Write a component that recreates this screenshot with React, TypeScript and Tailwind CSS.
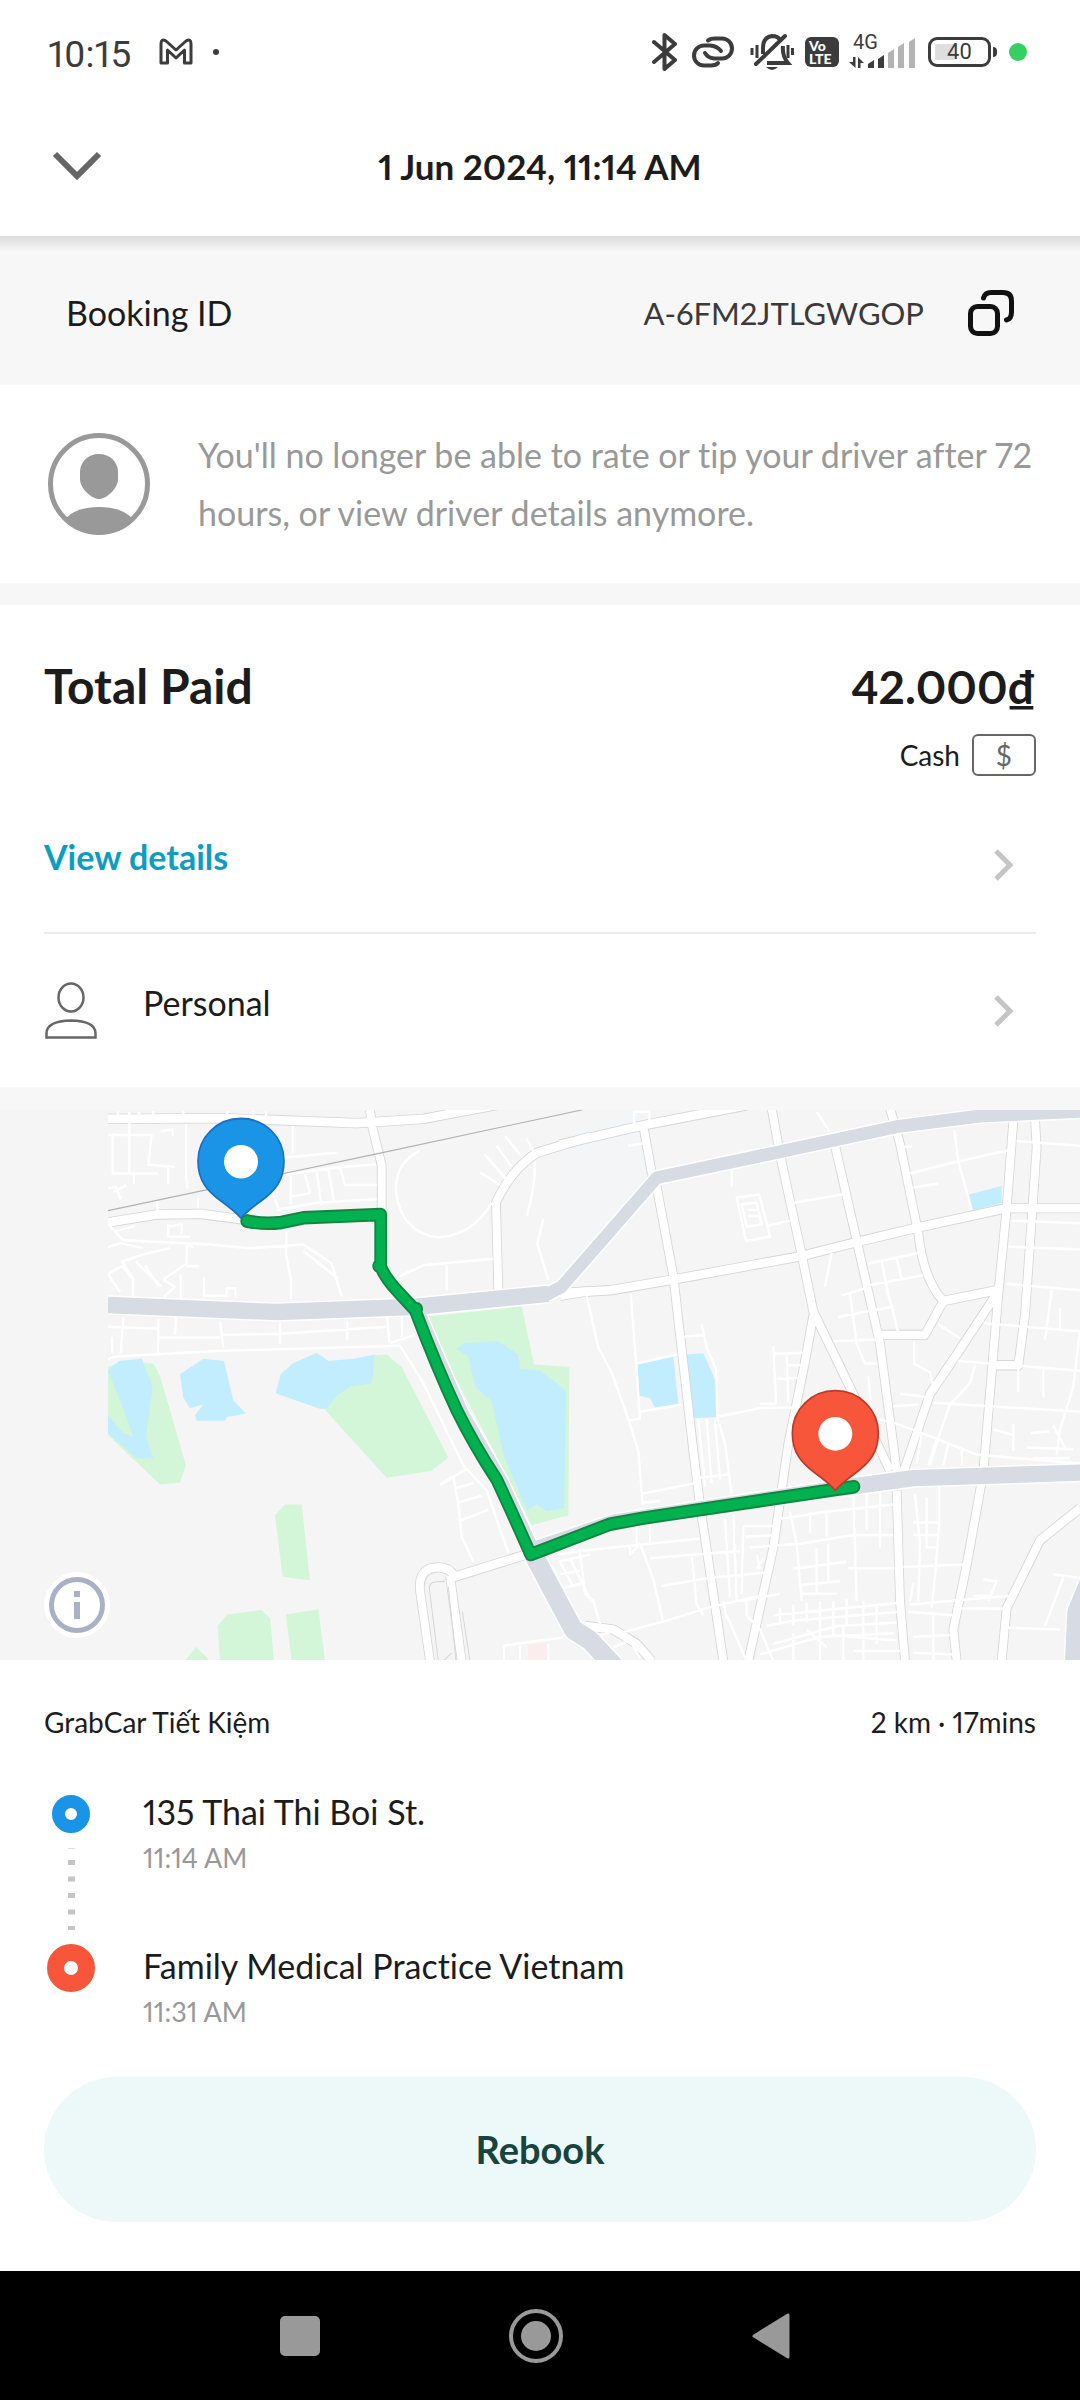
const WEST_MINOR = [
  "M54 95 H185 M68 90 V203 H205 M118 30 V205 M84 28 V50 M147 30 V45 M190 28 V45 M280 28 V45 M412 28 V50 M490 28 V50 M528 28 V50",
  "M185 92 L175 178 L255 185 M235 180 V232 M132 205 V232 M212 85 L248 80 V98 M288 65 V200 L292 245",
  "M54 245 L78 240 L92 275 M70 255 L110 235 M202 280 V308 M325 268 V300",
  "M608 70 V145 M585 158 L740 145 M545 250 L565 300 M602 210 V290 M602 268 L660 258 L645 205 M680 200 L694 290 M715 192 L732 280 M590 205 L750 185 L858 178 M750 185 L765 235 L860 235 M560 305 L680 285 L860 275",
  "M54 345 L100 390 L360 402 L480 412 L640 402 L725 455 L755 548 M590 365 L588 430 L603 500 V556 M640 420 L745 498 M54 410 L90 398 L160 412",
  "M75 365 L135 350 M235 345 V380 H300 M235 352 L275 345 V372 M220 500 L290 455 V402 L312 410 M290 463 H328 M272 485 V550 M342 492 V545 H410 V524 H436 V548",
  "M54 485 L95 462 L130 500 L128 545 M54 485 L90 535 M95 448 L130 498 M95 450 L165 428 L240 412 M138 450 L215 520 M165 460 L205 518 M220 500 L255 520 L222 548",
  "M54 632 L205 638 M100 605 L92 705 M66 660 V705 M258 605 L255 655 M205 705 V610 M205 662 L390 662 M390 618 L400 690 M400 655 L570 652 L890 632 M570 620 V680 M772 615 V670 M892 605 L898 675 M935 605 V660 M900 678 L975 655",
  "M54 725 Q62 715 110 714 L380 700 L930 685 L1000 790 L1120 1020 L1190 1090 L1255 1265",
  "M1050 1075 L1130 1030 M1090 1050 L1105 1130 L1115 1220 L1150 1290 M1095 1085 L1150 1070 M1105 1125 L1175 1105 M1110 1175 L1195 1145",
  "M990 140 Q915 170 918 255 Q935 370 1045 382 Q1150 375 1205 285",
  "M930 490 L1000 460 L1210 442 M1070 460 V530 M1335 170 Q1335 250 1310 322 M1360 330 L1342 400 L1375 500",
  "M1185 150 L1250 220 M1170 200 L1230 235 M1220 125 L1265 185 M1245 98 L1290 150 M1310 105 L1330 140",
  "M1385 1300 L1420 1370 M1405 1290 L1500 1270 M1440 1280 L1500 1395 M1400 1370 L1480 1350 M1242 1568 V1525 L1420 1502 M1290 1525 V1568 M1375 1520 V1568",
];

const EAST_MINOR = [
  "M222 65 V30 H268 V65 M205 125 L250 118 M515 190 V240 M770 30 L808 85",
  "M530 270 L598 262 L630 380 L558 392 Z M545 290 L590 285 L605 345 L560 352 Z M565 305 H590 M565 322 H595 M620 350 L690 335 M700 285 L848 262",
  "M1020 128 H1055 M1050 203 L1180 172 L1345 138 M1183 80 L1195 170 L1235 305 M1060 242 L1135 232 M1370 112 L1560 125 M1355 335 L1560 342 M1345 408 L1560 416 M1340 512 L1560 530",
  "M80 545 L115 690 L155 760 L205 890 L235 980 L248 1130 M212 540 L228 730 L240 890 L205 895 M240 870 L365 850 M370 660 L430 655 M425 625 L440 690 L468 750 L472 885 L495 960 L515 1100 M230 735 L350 710",
  "M640 685 L648 845 M640 708 L740 705 M680 705 L685 845 M680 740 H730 M650 778 L720 775 M470 885 L600 860 L700 858 M600 848 H650",
  "M815 425 L795 520 M925 455 L1080 425 M930 515 L1090 488 M965 450 L980 520 L1015 650 M1010 440 L1025 500 M845 545 L930 520 M870 540 L890 680 L915 735 H950 M835 605 L1000 575 M820 672 L960 668 M980 530 L1000 590",
  "M1135 625 L1200 665 M1062 675 V735 L1110 760 L1120 800 M1195 728 L1560 755 M1270 622 L1560 645 M1245 740 L1230 790 L1170 850 L1140 930 L1110 1020 M1120 845 L1560 870 M1475 530 L1455 670 M1500 580 V640",
  "M1560 640 L1540 800 L1500 920 L1490 990 M1450 750 V830 M1375 750 V815 M950 890 L1000 900 L1100 935 L1250 990 L1560 1015 M1020 820 L1110 830 M1000 855 L1075 850 M925 770 L935 880 M1085 930 L1070 1015 M1130 945 L1105 1020 M1165 960 L1150 1020 M1205 975 V1020",
  "M1300 920 L1360 935 M1360 905 V980 M1410 930 L1470 925 M1400 970 L1540 975 M1480 910 L1520 980 M1420 1000 H1530",
  "M415 890 L435 1080 M440 890 L455 1070 M465 890 L480 1060 M420 1055 L510 1045 M245 1100 L405 1070 M250 1125 L300 1120 M230 1160 V1240 M270 1160 V1235",
  "M0 1270 L60 1260 L420 1225 M270 1280 L540 1260 M240 1240 L280 1340 L310 1460 M60 1265 L75 1380 L100 1400 L125 1480 M0 1290 L40 1360 M0 1365 L70 1350 M0 1325 L60 1315",
  "M305 1358 L450 1335 L620 1320 M180 1490 L320 1455 L440 1420 L600 1385 M395 1270 L410 1410 L430 1440 M210 1245 V1270 L240 1240 M520 1160 L530 1400 M495 1170 L510 1390 M550 1190 L545 1380",
  "M550 1190 H640 M660 1170 L800 1150 L1000 1130 M555 1220 L650 1215 M570 1250 L720 1240 L880 1215 H1000 M690 1150 L710 1240 L725 1400 M750 1150 V1210 M800 1145 V1220 M880 1095 L890 1400 M920 1090 V1200 M960 1090 V1250",
  "M1065 1100 L1080 1240 L1075 1400 M1100 1110 V1250 H1130 M1138 1080 V1180 L1125 1330 L1115 1420 M1060 1180 H1135 M1060 1215 H1135 M1030 1305 L1210 1298 M865 1308 H1010 M700 1310 L860 1290 M720 1355 L840 1345 M720 1380 H830 M770 1250 V1380 M805 1240 V1350",
  "M540 1400 L660 1380 M590 1270 L600 1310 M610 1280 L590 1310 M640 1440 L1020 1405 M620 1470 L700 1455 L1020 1430 M560 1400 V1440 L600 1480 L640 1568 M500 1440 L560 1568 M490 1400 L500 1450 M660 1420 V1460 M700 1410 V1470 M740 1405 V1460 M780 1400 V1568 M820 1400 V1500 M860 1395 V1470 M910 1400 V1568 M950 1410 V1520",
  "M640 1520 L830 1470 L1010 1460 M600 1550 L780 1500 L1000 1490 M740 1480 L800 1530 M860 1500 L1010 1510 M700 1490 V1568 M850 1470 V1568 M880 1540 H1020 M1045 1430 L1180 1440 M1050 1410 L1350 1385 M1180 1420 L1330 1422 M1060 1500 L1180 1495 M1060 1545 L1190 1550 M1120 1440 V1568",
  "M1270 1340 L1310 1345 L1285 1400 M1240 1385 H1290 M1480 1325 L1555 1335 M1510 1335 L1455 1470 M1345 1475 L1500 1480 M1060 1350 L1050 1400 M115 1495 L150 1490 M160 1530 L210 1510 L240 1560",
];

const WEST_MAJOR = [
  "M54 50 L400 48 L800 62 L1000 50 L1410 -22",
  "M840 25 L845 65 L875 180 L875 310",
  "M54 340 L200 318 L330 316 L460 332",
  "M1500 100 L1340 145 Q1260 195 1218 285 L1225 530",
  "M1315 1268 L1095 1332 Q1075 1300 1030 1307 Q985 1315 990 1370 L1020 1568",
  "M1080 1330 L1115 1568",
  "M1410 545 L1500 532",
];

const EAST_MAJOR = [
  "M0 122 L250 68 L560 12",
  "M250 70 L275 200 L290 240 L340 490 L400 980 L420 1130 L490 1568",
  "M0 538 L150 530 L340 500 L720 435 L890 395 L1070 355 L1340 300 H1560",
  "M635 20 L660 150 L725 430 L760 590 L890 840 L990 1035",
  "M760 600 L735 730 L685 960 L640 1250 L565 1568",
  "M825 125 L890 390 L960 680 L1010 1035",
  "M990 20 L1020 120 L1075 370 Q1090 500 1150 560 L1310 530",
  "M1150 560 L1095 655 H960",
  "M1360 55 L1340 300 L1315 540 L1270 1040 L1220 1300 L1180 1480 L1190 1568",
  "M1425 50 L1430 130 L1395 600 L1375 740 H1300",
  "M1310 540 L1190 710 L1110 820 L1030 1040",
  "M1010 1090 L1020 1400 L1035 1568",
  "M1560 1140 L1440 1230 L1340 1420 L1325 1568",
  "M75 1470 L160 1480 L230 1520 L275 1568",
];

const HIGHWAYS = [
  { d: "M54 571 L560 591 L980 576 L1375 540 L1415 520 L1700 215 L2030 150 L2420 72 L2670 42 L2990 28", w: 36 },
  { d: "M54 571 L560 591 L980 576 L1375 540", w: 46 },
  { d: "M990 590 L1120 870 L1240 1065 L1330 1248 L1570 1172 L2280 1072", w: 28 },
  { d: "M2250 1084 L2470 1056 L2990 1040", w: 46 },
  { d: "M1330 1270 L1450 1480 L1500 1510 L1590 1600", w: 56 },
  { d: "M3012 1310 L2958 1430 L2950 1590", w: 52 },
];

const PARKS = [
  "M54 745 L100 728 L190 735 L210 770 L288 1020 L270 1068 L210 1074 L54 935 Z",
  "M850 712 L890 710 L935 745 L1075 998 L1025 1035 L890 1055 L705 865 L740 800 Z",
  "M1000 605 L1295 575 L1332 738 L1438 745 L1435 1160 L1325 1188 L1200 960 Z",
  "M555 1160 L585 1130 H635 L660 1342 L578 1332 Z",
  "M383 1470 L412 1438 L515 1425 L540 1448 L552 1568 H390 Z",
  "M588 1438 L685 1423 L705 1568 H605 Z",
  "M285 1568 L318 1528 L360 1568 Z",
];

const WATERS = [
  "M54 755 L88 728 L155 722 L188 800 L168 940 L190 1000 L140 1000 L54 930 V880 L100 930 L130 940 L95 850 Z",
  "M270 765 L340 722 L402 728 L430 838 L468 875 L410 885 L405 895 H320 L315 880 L340 850 L300 860 L280 830 Z",
  "M558 815 L572 765 L608 735 L680 705 L715 728 L790 722 L855 710 L845 790 L780 800 L740 825 L710 862 L690 862 L560 820 Z",
  "M1100 695 L1120 678 L1225 672 L1285 710 L1290 750 L1350 755 L1428 810 L1422 1140 L1370 1148 L1340 1130 L1310 1145 L1240 990 L1205 840 L1155 800 L1135 715 Z",
  "M1643 738 L1750 715 L1765 850 L1695 858 L1680 832 L1648 825 Z",
  "M1785 710 L1840 706 L1880 790 V885 L1810 888 Z",
  "M2637 262 L2735 238 V285 L2645 308 Z",
];

const ROUTE =
  "M470 336 Q520 346 575 340 L640 327 L872 318 L872 458 L866 462 L872 464 Q885 495 925 535 L972 582 L980 582 L978 592 Q1040 745 1100 865 Q1150 960 1220 1060 Q1270 1160 1322 1270 L1560 1185 L1660 1168 L2292 1080";

function Roads({ major, minor, layer }: { major: string[]; minor: string[]; layer: "casing" | "fill" }) {
  if (layer === "casing") {
    return <path d={major.join(" ")} stroke="#d6d6d9" strokeWidth="29" />;
  }
  return (
    <>
      <path d={minor.join(" ")} stroke="#fff" strokeWidth="7" />
      <path d={major.join(" ")} stroke="#fff" strokeWidth="24" />
    </>
  );
}

function Pin({ fill, edge, at }: { fill: string; edge: string; at: string }) {
  return (
    <g transform={at}>
      <path
        d="M0 -123 C72 -123 129 -70 129 -4 C129 50 102 80 60 108 Q20 135 0 156 Q-20 135 -60 108 C-102 80 -129 50 -129 -4 C-129 -70 -72 -123 0 -123 Z"
        fill={fill}
        stroke={edge}
        strokeWidth="5"
        strokeLinejoin="round"
      />
      <ellipse rx="51" ry="47" cy="-2" fill="#fff" />
    </g>
  );
}

function RouteMap() {
  return (
    <svg
      viewBox="0 0 1080 550"
      role="img"
      aria-label="Route map from pick-up to drop-off"
      className="block w-full bg-[#f5f5f5]"
    >
      <defs>
        <clipPath id="tile">
          <rect x="54" y="25" width="3000" height="1560" />
        </clipPath>
      </defs>
      <g transform="translate(90 -9) scale(.33333 .35714)" fill="none" strokeLinejoin="round">
        <g clipPath="url(#tile)">
          <path d="M1410 560 L1700 240 L1650 30 L1400 110 Z" fill="#f3f5f6" />
          <path d={PARKS.join(" ")} fill="#d2f6d7" />
          <path d={WATERS.join(" ")} fill="#c1edfe" />
          <path d="M1315 1522 L1368 1518 L1375 1568 H1315 Z" fill="#fbecee" />
          <Roads major={WEST_MAJOR} minor={[]} layer="casing" />
          <g transform="translate(1410 0)">
            <Roads major={EAST_MAJOR} minor={[]} layer="casing" />
          </g>
          <Roads major={WEST_MAJOR} minor={WEST_MINOR} layer="fill" />
          <g transform="translate(1410 0)">
            <Roads major={EAST_MAJOR} minor={EAST_MINOR} layer="fill" />
          </g>
          <path d="M1060 1568 L1085 1545 M1045 1568 L1018 1365 Q1018 1348 1035 1347 L1065 1345 M1075 1360 L1098 1568 M1117 1430 L1140 1568" stroke="#d6d6d9" strokeWidth="3" />
          <path d="M54 307 L860 148 L1490 22" stroke="#b0b0b3" strokeWidth="3" />
          {HIGHWAYS.map((h) => (
            <path key={h.d} d={h.d} stroke="#fff" strokeWidth={h.w + 8} />
          ))}
          {HIGHWAYS.map((h) => (
            <path key={h.d} d={h.d} stroke="#d7dbe4" strokeWidth={h.w} />
          ))}
        </g>
        <path d={ROUTE} stroke="#118542" strokeWidth="38" strokeLinecap="round" />
        <path d={ROUTE} stroke="#00b14f" strokeWidth="27" strokeLinecap="round" />
        <Pin fill="#1a94e6" edge="#1b6fc4" at="translate(453 172)" />
        <Pin fill="#f7563a" edge="#bd3a2a" at="translate(2236 934)" />
      </g>
    </svg>
  );
}

function ChevronRight() {
  return (
    <svg viewBox="0 0 20 32" className="mt-4 mr-[22px] h-8 w-5 shrink-0" fill="none" stroke="#c5c5c5" strokeWidth="5" aria-hidden="true">
      <path d="M2 2 L16 16 L2 30" />
    </svg>
  );
}

function StatusIcons() {
  return (
    <div className="flex h-10 items-center text-[#3c3c3c]">
      <svg viewBox="0 0 26 40" className="h-10 w-[26px]" fill="none" stroke="currentColor" strokeWidth="4" strokeLinejoin="round" aria-label="Bluetooth">
        <path d="M2 10 L23 28 L12.500 37 V3 L23 12 L2 30" strokeLinecap="round" />
      </svg>
      <svg viewBox="0 0 42 32" className="ml-3.5 h-8 w-[42px]" fill="none" stroke="currentColor" strokeWidth="4" strokeLinecap="round" aria-label="Linked device">
        <path d="M16 4.500 Q18 2.500 23 2.500 H30 A10 10 0 0 1 30 22.500 H22 Q16 22 13 17" />
        <path d="M26 27 Q24 29.500 19 29.500 H12 A10 10 0 0 1 12 9.500 H18 Q25 10 29 15" />
      </svg>
      <svg viewBox="0 0 44 40" className="ml-4 h-10 w-11" fill="none" stroke="currentColor" strokeWidth="4" aria-label="Silent">
        <path d="M13 22 V16 Q13 5 22 4 Q28 4 30 8 M33 14 Q32 24 38 31 H17" />
        <path d="M6 32 L35 4" strokeLinecap="round" />
        <path d="M2 16 V23 M7 13 V26 M38 13 V26 M42.500 16 V23" strokeWidth="3" />
        <path d="M16 35 H28 Q22 41 16 35 Z" fill="currentColor" stroke="none" />
      </svg>
      <div className="ml-[11px] flex h-[30px] w-[34px] flex-col justify-center rounded-md bg-[#3c3c3c] pl-1 font-[Lato] text-[14px] leading-[13px] font-black text-white">
        <span>Vo</span>
        <span>LTE</span>
      </div>
      <div className="ml-2.5 flex h-10 w-[67px] flex-col">
        <span className="pl-1 font-[Roboto] text-[20px] leading-5">4G</span>
        <svg viewBox="0 0 67 32" className="-mt-3.5 h-8 w-[67px]" fill="currentColor" aria-label="Signal strength">
          <path d="M4 19 H6.500 V30 L0 24 H4 Z M9 30 V19 L15 25 H11.500 V30 Z" />
          <path d="M19 30 V26 L25 22 V30 Z M29 30 V21 L35 17 V30 Z" />
          <path d="M39 30 V15 L45 11 V30 Z M49 30 V9 L55 5 V30 Z M60 30 V4 L66 0 V30 Z" fill="#b4b4b4" />
        </svg>
      </div>
      <div className="ml-3 flex h-[30px] w-[63px] items-center justify-center rounded-[9px] border-[3px] border-current bg-linear-to-r from-[#dedede] from-40% to-white to-40% bg-clip-content p-1 font-[Roboto] text-[22px] leading-[22px]">
        40
      </div>
      <div className="ml-0.5 h-2.5 w-1 rounded-r bg-[#3c3c3c]" />
      <div className="ml-3 size-[18px] rounded-full bg-[#35d061]" />
    </div>
  );
}

function Stop({ name, time, children }: { name: string; time: string; children: React.ReactNode }) {
  return (
    <li className="flex">
      <div className="flex w-[99px] shrink-0 flex-col items-start">{children}</div>
      <div>
        <p className="text-[34px] leading-[48px]">{name}</p>
        <p className="mt-0.5 text-[27px] leading-10 text-[#999]">{time}</p>
      </div>
    </li>
  );
}

export default function App() {
  return (
    <div className="flex min-h-screen flex-col bg-white font-[Lato,'Noto_Sans',sans-serif] text-[#1c1c1c] proportional-nums [font-variant-ligatures:none]">
      <div className="flex items-start justify-between pt-8 pr-[53px] pl-12">
        <div className="flex items-start font-[Roboto] text-[37px] leading-[46px] text-[#3c3c3c]">
          <span>10:15</span>
          <svg viewBox="0 0 34 40" className="ml-7 h-10 w-[34px]" fill="none" stroke="currentColor" strokeWidth="3" strokeLinejoin="round" aria-label="Mail">
            <path d="M2 31 V12 Q2 6 7 9 L17 18 L27 9 Q32 6 32 12 V31 H25.500 V18 L17 26 L8.500 18 V31 Z" />
          </svg>
          <span className="mt-[17px] ml-5 size-1.5 rounded-full bg-current" />
        </div>
        <StatusIcons />
      </div>

      <header className="grid grid-cols-[1fr_auto_1fr] items-center px-[52px] pt-16 pb-[46px]">
        <button type="button" aria-label="Close" className="justify-self-start">
          <svg viewBox="0 0 50 30" className="h-[30px] w-[50px]" fill="none" stroke="#666" strokeWidth="6" aria-hidden="true">
            <path d="M3 3 L25 25 L47 3" />
          </svg>
        </button>
        <h1 className="text-[35px] leading-[48px] font-bold">1 Jun 2024, 11:14 AM</h1>
      </header>

      <div className="h-4 bg-linear-to-b from-[#dcdcdc] to-[#f7f7f7]" />
      <section className="flex items-center justify-between bg-[#f7f7f7] px-[66px] pt-[37px] pb-12 text-[34px] leading-[48px]">
        <span>Booking ID</span>
        <div className="flex items-center gap-11">
          <span className="text-[31px] text-[#3a3a3a]">A-6FM2JTLGWGOP</span>
          <button type="button" aria-label="Copy booking ID">
            <svg viewBox="0 0 46 46" className="block size-[46px]" fill="none" stroke="#111" strokeWidth="5" strokeLinecap="round" aria-hidden="true">
              <rect x="2.500" y="16.500" width="27" height="27" rx="7" />
              <path d="M15.500 8 Q17 2.500 23 2.500 H35 Q43.500 2.500 43.500 11 V22 Q43.500 29 38.500 30" />
            </svg>
          </button>
        </div>
      </section>

      <section className="flex items-center gap-12 py-[41px] pr-9 pl-12">
        <svg viewBox="0 0 102 102" className="size-[102px] shrink-0" aria-hidden="true">
          <circle cx="51" cy="51" r="48.500" fill="none" stroke="#999" strokeWidth="5" />
          <path d="M51 21 C62 21 70 29 70 39 V46 C70 56 58 66 51 66 C44 66 32 56 32 46 V39 C32 29 40 21 51 21 Z" fill="#999" />
          <path d="M17 86 Q28 74 51 74 Q74 74 85 86 Q71 101 51 101 Q31 101 17 86 Z" fill="#999" />
        </svg>
        <p className="text-[34px] leading-[58px] text-[#999]">
          You'll no longer be able to rate or tip your driver after 72 hours, or view driver details anymore.
        </p>
      </section>

      <div className="h-[22px] bg-[#f7f7f7]" />

      <section className="px-11 pt-[53px]">
        <div className="flex items-baseline justify-between leading-[56px] font-bold">
          <h2 className="text-[48px]">Total Paid</h2>
          <span className="text-[46px]">42.000₫</span>
        </div>
        <div className="mt-[19px] flex items-center justify-end gap-3 text-[28px]">
          <span>Cash</span>
          <span className="flex h-[42px] w-16 items-center justify-center rounded-md border-2 border-[#676767] text-[#676767]">$</span>
        </div>
        <button type="button" className="mt-[57px] flex w-full items-start justify-between border-b-2 border-[#ebebeb] pb-[51px] text-left">
          <span className="text-[34px] leading-[48px] font-bold text-[#0d9dc0]">View details</span>
          <ChevronRight />
        </button>
        <button type="button" className="flex w-full items-start pt-[45px] pb-12 text-left">
          <svg viewBox="0 0 54 60" className="h-[60px] w-[54px] shrink-0" fill="none" stroke="#676767" strokeWidth="2.500" aria-hidden="true">
            <ellipse cx="27" cy="18.500" rx="12.500" ry="14" />
            <path d="M2.500 58.500 V54 Q3 42 27 41.500 Q51 42 51.500 54 V58.500 Z" />
          </svg>
          <span className="ml-[45px] grow text-[34px] leading-[48px]">Personal</span>
          <ChevronRight />
        </button>
      </section>

      <div className="h-[23px] bg-[#f7f7f7]" />

      <section className="relative">
        <RouteMap />
        <button
          type="button"
          aria-label="Map information"
          className="absolute bottom-[22px] left-11 flex size-[66px] items-center justify-center rounded-full bg-white"
        >
          <svg viewBox="0 0 56 56" className="size-14" aria-hidden="true">
            <circle cx="28" cy="28" r="25.500" fill="none" stroke="#a9b1c6" strokeWidth="5" />
            <path d="M25 14 H31 V20 H25 Z M25 25 H31 V42 H25 Z" fill="#a9b1c6" />
          </svg>
        </button>
      </section>

      <section className="px-11 pt-[42px] pb-[49px]">
        <div className="flex justify-between text-[28px] leading-10">
          <span>GrabCar Tiết Kiệm</span>
          <span>2 km · 17mins</span>
        </div>
        <ol className="mt-[46px] flex flex-col">
          <Stop name="135 Thai Thi Boi St." time="11:14 AM">
            <div className="flex w-[54px] flex-col items-center pt-[7px] pb-2.5">
              <span className="size-[38px] rounded-full border-[13px] border-[#1a94e6]" />
              <svg viewBox="0 0 7 84" className="mt-[15px] h-[84px] w-[7px]" aria-hidden="true">
                <path d="M3.500 0 V1" stroke="#ddd" strokeWidth="7" />
                <path d="M3.500 12 V82" stroke="#c5c5c5" strokeWidth="7" strokeDasharray="5 11.500" />
              </svg>
            </div>
          </Stop>
          <Stop name="Family Medical Practice Vietnam" time="11:31 AM">
            <div className="flex w-[54px] flex-col items-center">
              <span className="mt-0.5 size-12 rounded-full border-[17px] border-[#f7563a]" />
            </div>
          </Stop>
        </ol>
        <button type="button" className="mt-[45px] w-full rounded-full bg-[#ecf9f8] py-12 text-[38px] leading-[49px] font-bold text-[#18443f]">
          Rebook
        </button>
      </section>

      <nav className="mt-auto flex items-center justify-center gap-[180px] bg-black py-[37px] pr-2">
        <button type="button" aria-label="Recent apps">
          <svg viewBox="0 0 56 56" className="block size-14" fill="#999" aria-hidden="true">
            <rect x="8" y="8" width="40" height="40" rx="5" />
          </svg>
        </button>
        <button type="button" aria-label="Home">
          <svg viewBox="0 0 56 56" className="block size-14" fill="#999" aria-hidden="true">
            <circle cx="28" cy="28" r="25" fill="none" stroke="#999" strokeWidth="4" />
            <circle cx="28" cy="28" r="15" />
          </svg>
        </button>
        <button type="button" aria-label="Back">
          <svg viewBox="0 0 56 56" className="block size-14" fill="#999" stroke="#999" strokeWidth="3" strokeLinejoin="round" aria-hidden="true">
            <path d="M44 7 V49 L10 28 Z" />
          </svg>
        </button>
      </nav>
    </div>
  );
}
